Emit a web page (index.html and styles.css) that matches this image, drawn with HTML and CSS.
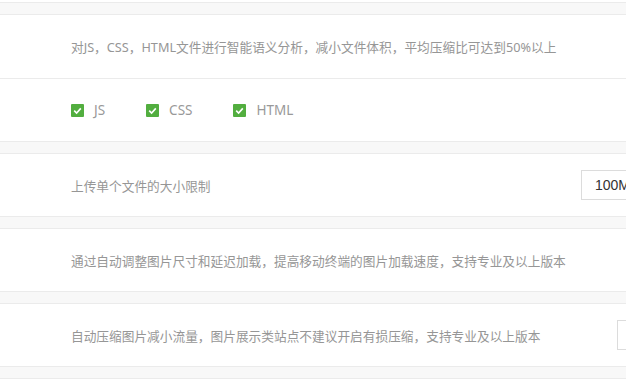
FILE: index.html
```html
<html>
  <head>
    <meta charset="utf-8">
    <title>网站加速设置</title>
    <link rel="stylesheet" href="styles.css">
  </head>
  <body>
    <main>
      <div class="panel">
        <div class="card card-stub"></div>

        <div class="card">
          <div class="row">
            <span class="desc">对JS，CSS，HTML文件进行智能语义分析，减小文件体积，平均压缩比可达到50%以上</span>
          </div>
          <div class="row">
            <label class="check"><span class="box"><svg viewBox="0 0 13 13" width="13" height="13"><polyline points="3.2,6.6 5.6,9 9.8,4.4" fill="none" stroke="#fff" stroke-width="1.6"/></svg></span>JS</label>
            <label class="check"><span class="box"><svg viewBox="0 0 13 13" width="13" height="13"><polyline points="3.2,6.6 5.6,9 9.8,4.4" fill="none" stroke="#fff" stroke-width="1.6"/></svg></span>CSS</label>
            <label class="check"><span class="box"><svg viewBox="0 0 13 13" width="13" height="13"><polyline points="3.2,6.6 5.6,9 9.8,4.4" fill="none" stroke="#fff" stroke-width="1.6"/></svg></span>HTML</label>
          </div>
        </div>

        <div class="card">
          <div class="row">
            <span class="desc">上传单个文件的大小限制</span>
            <input class="field field-wide" type="text" value="100M">
          </div>
        </div>

        <div class="card">
          <div class="row">
            <span class="desc">通过自动调整图片尺寸和延迟加载，提高移动终端的图片加载速度，支持专业及以上版本</span>
          </div>
        </div>

        <div class="card">
          <div class="row">
            <span class="desc">自动压缩图片减小流量，图片展示类站点不建议开启有损压缩，支持专业及以上版本</span>
            <input class="field field-narrow" type="text" value="">
          </div>
        </div>

        <div class="card card-end"></div>
      </div>
    </main>
  </body>
</html>
```

FILE: styles.css
```css
html,
body {
  margin: 0;
  overflow: hidden;
  background: #f8f8f8;
}

body {
  font-family: "Noto Sans", "Noto Sans CJK SC", sans-serif;
  font-size: 12.7px;
  color: #969696;
}

main {
  width: 626px;
  height: 386px;
  overflow: hidden;
}

.panel {
  width: 720px;
  display: flex;
  flex-direction: column;
  gap: 11px;
}

.card {
  background: #fff;
  border-top: 1px solid #ebebeb;
  border-bottom: 1px solid #ebebeb;
  min-height: 62px;

  & .row + .row {
    border-top: 1px solid #ebebeb;
  }
}

.card-stub {
  min-height: 2px;
  height: 2px;
  border-top: 0;
}

.card-end {
  min-height: 20px;
}

.row {
  display: flex;
  align-items: center;
  height: 62px;
  padding-left: 71px;
}

.card .row:first-child:not(:last-child) {
  height: 63px;
}

.desc {
  flex: 1;
  white-space: nowrap;
}

.check {
  display: flex;
  align-items: center;
  gap: 10px;
  margin-right: 41px;
  font-size: 13.5px;
  color: #999;

  & .box {
    display: block;
    width: 13px;
    height: 13px;
    background: #52ae3f;
    border-radius: 1px;

    & svg {
      display: block;
    }
  }
}

.field {
  box-sizing: border-box;
  height: 30px;
  border: 1px solid #dcdcdc;
  background: #fff;
  padding: 0 13px;
  font-family: "Liberation Sans", "Noto Sans CJK SC", sans-serif;
  font-size: 14px;
  color: #333;
  outline: none;
}

.field-wide {
  width: 139px;
}

.field-narrow {
  width: 103px;
}
```
